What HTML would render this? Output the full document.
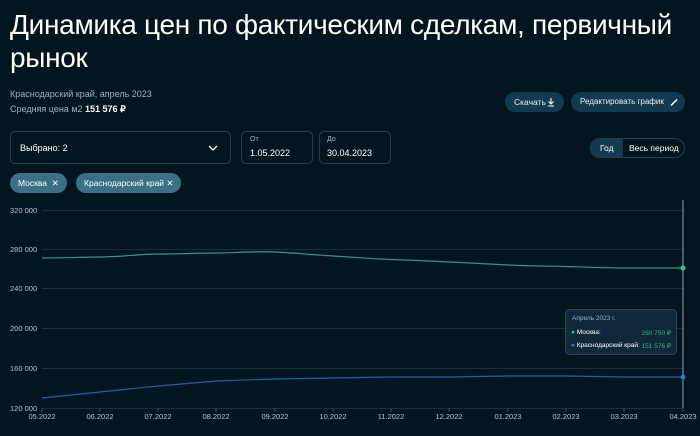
<!DOCTYPE html><html><head><meta charset="utf-8"><style>
*{margin:0;padding:0;box-sizing:border-box}
body{width:700px;height:436px;background:#031620;color:#fff;font-family:"Liberation Sans",sans-serif;position:relative;overflow:hidden}
.a{position:absolute;white-space:nowrap}
h1{position:absolute;left:10px;top:8px;font-weight:400;font-size:28px;line-height:33px;width:690px;letter-spacing:-0.3px}
.sm{font-size:9px;color:#9fb0bb}
.btn{position:absolute;height:20px;border-radius:10px;background:#123b51;font-size:8.5px;color:#e6eef2;line-height:20px;padding:0 9px;white-space:nowrap}
.box{position:absolute;border:1px solid #24404f;border-radius:5px}
.chip{position:absolute;height:20px;border-radius:10px;background:#3a6f86;font-size:8.5px;line-height:20px;padding:0 8px;color:#fff;white-space:nowrap}
.yl{position:absolute;left:10px;font-size:7.5px;color:#b6c3cb}
.xl{position:absolute;top:412px;font-size:7.5px;color:#b6c3cb;width:40px;text-align:center}
</style></head><body>
<h1>Динамика цен по фактическим сделкам, первичный рынок</h1>
<div class="a sm" style="left:10px;top:89px">Краснодарский край, апрель 2023</div>
<div class="a sm" style="left:10px;top:104px">Средняя цена м2 <b style="color:#fff">151 576 ₽</b></div>
<div class="btn" style="left:505px;top:92px;width:59px">Скачать
<svg style="position:absolute;left:42px;top:5px" width="8" height="10"><path d="M4 1v6M1.5 4.5L4 7l2.5-2.5M1 9h6" stroke="#fff" stroke-width="1.1" fill="none"/></svg></div>
<div class="btn" style="left:571px;top:92px;width:114px;font-size:8px">Редактировать график
<svg style="position:absolute;left:98px;top:5px" width="10" height="10"><path d="M2 8.5L8 2.5" stroke="#fff" stroke-width="1.5"/></svg></div>
<div class="box" style="left:10px;top:131px;width:221px;height:33px"></div>
<div class="a" style="left:20px;top:143px;font-size:9px">Выбрано: 2</div>
<svg class="a" style="left:208px;top:144px" width="10" height="8"><path d="M1 2l4 4 4-4" stroke="#fff" stroke-width="1.3" fill="none"/></svg>
<div class="box" style="left:241px;top:131px;width:72px;height:33px"></div>
<div class="a" style="left:250px;top:136px;font-size:7px;color:#9fb0bb">От</div>
<div class="a" style="left:250px;top:148px;font-size:9px">1.05.2022</div>
<div class="box" style="left:319px;top:131px;width:72px;height:33px"></div>
<div class="a" style="left:327px;top:136px;font-size:7px;color:#9fb0bb">До</div>
<div class="a" style="left:327px;top:148px;font-size:9px">30.04.2023</div>
<div class="box" style="left:590px;top:138px;width:95px;height:20px;border-radius:10px;overflow:hidden"><div style="position:absolute;left:0;top:0;width:32px;height:20px;background:#123b51"></div></div>
<div class="a" style="left:600px;top:143px;font-size:8.5px">Год</div>
<div class="a" style="left:629px;top:143px;font-size:8.5px">Весь период</div>
<div class="chip" style="left:10px;top:173px;width:57px">Москва &nbsp;✕</div>
<div class="chip" style="left:76px;top:173px;width:105px">Краснодарский край ✕</div>
<div class="yl" style="top:206px">320 000</div>
<div class="yl" style="top:245px">280 000</div>
<div class="yl" style="top:284px">240 000</div>
<div class="yl" style="top:324px">200 000</div>
<div class="yl" style="top:364px">160 000</div>
<div class="yl" style="top:404px">120 000</div>
<svg class="a" style="left:0;top:0" width="700" height="436">
<g stroke="#1b2e3a" stroke-width="1"><path d="M42 210.5H683M42 249.5H683M42 288.5H683M42 328.5H683M42 368.5H683M42 408.5H683"/></g>
<path d="M683 200V412" stroke="#8fa3b0" stroke-width="1"/>
<path d="M42 258 C70 258 80 257 100 257 S140 254 158 254 S200 253 216 253 S255 251 275 252 S315 255 333 256 S375 259 391 259.5 S430 261 449 262 S490 264 508 265 S550 266 566 266.5 S610 268 624 268 L683 268" stroke="#2a9c7f" stroke-width="1.2" fill="none"/>
<path d="M42 398 L100 392 L158 386 L216 381 L275 379 L333 378 L391 377 L449 377 L508 376 L566 376 L624 377 L683 377" stroke="#1f5fa8" stroke-width="1.2" fill="none"/>
<circle cx="683" cy="268" r="2.5" fill="#2fc89a"/><circle cx="683" cy="377" r="2.5" fill="#2a78d6"/>
<g stroke="#3a4d59"><path d="M42 408v4M100 408v4M158 408v4M216 408v4M275 408v4M333 408v4M391 408v4M449 408v4M508 408v4M566 408v4M624 408v4M683 408v4"/></g>
</svg>
<div class="xl" style="left:22px">05.2022</div><div class="xl" style="left:80px">06.2022</div><div class="xl" style="left:138px">07.2022</div><div class="xl" style="left:196px">08.2022</div><div class="xl" style="left:255px">09.2022</div><div class="xl" style="left:313px">10.2022</div><div class="xl" style="left:371px">11.2022</div><div class="xl" style="left:429px">12.2022</div><div class="xl" style="left:488px">01.2023</div><div class="xl" style="left:546px">02.2023</div><div class="xl" style="left:604px">03.2023</div><div class="xl" style="left:663px">04.2023</div>
<div class="a" style="left:565px;top:309px;width:112px;height:46px;background:#10283a;border:1px solid #2a4656;border-radius:5px;font-size:6.5px">
<div style="position:absolute;left:6px;top:5px;color:#9fb0bb">Апрель 2023 г.</div>
<div style="position:absolute;left:5px;top:19px"><span style="color:#2fc89a">●</span> Москва:</div>
<div style="position:absolute;right:5px;top:19px;color:#2fb07a">260 750 ₽</div>
<div style="position:absolute;left:5px;top:32px"><span style="color:#2a78d6">●</span> Краснодарский край:</div>
<div style="position:absolute;right:5px;top:32px;color:#2fb07a">151 576 ₽</div>
</div>
</body></html>
